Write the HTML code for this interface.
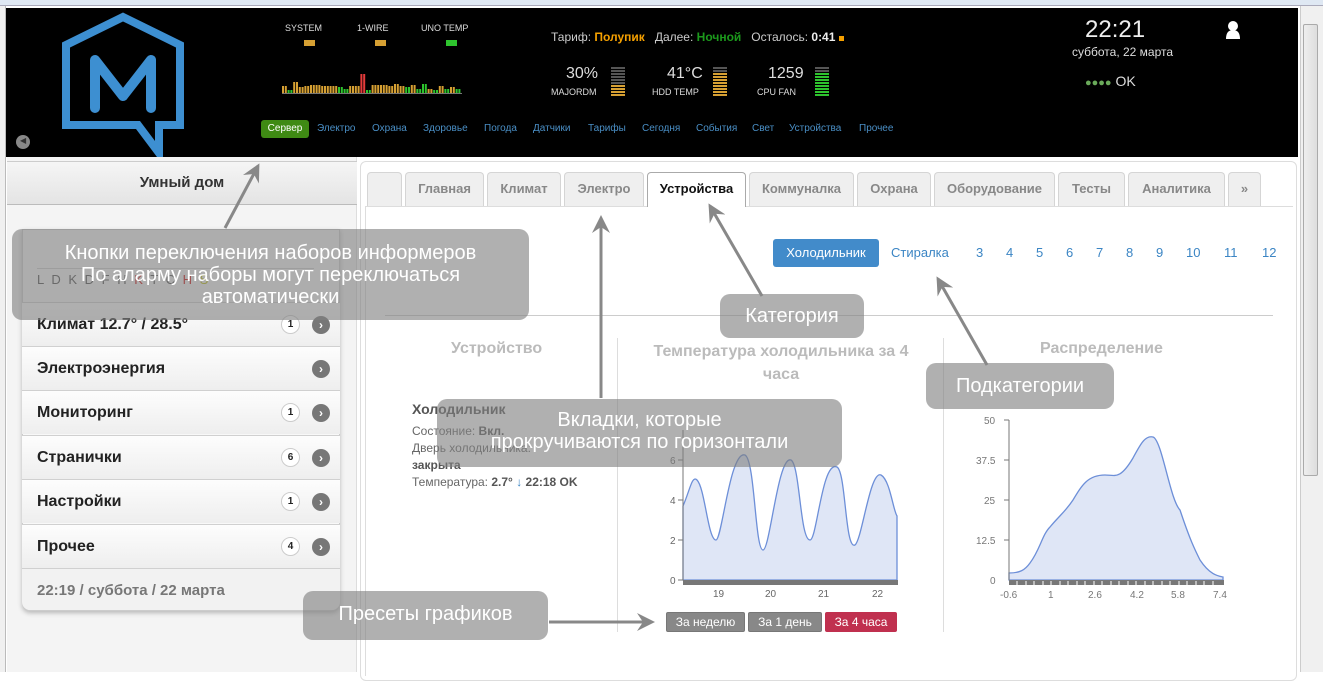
<!DOCTYPE html>
<html><head><meta charset="utf-8">
<style>
*{margin:0;padding:0;box-sizing:border-box}
body{width:1323px;height:672px;overflow:hidden;position:relative;background:#fff;font-family:"Liberation Sans","DejaVu Sans",sans-serif}
.a{position:absolute}
.hdr{left:6px;top:8px;width:1292px;height:149px;background:#000}
.t{position:absolute;white-space:nowrap}
.nav a{color:#4a8fc6;font-size:10px;text-decoration:none;position:absolute;top:123px}
.tab{position:absolute;top:172px;height:34px;background:#efefef;border:1px solid #d5d5d5;border-bottom:none;border-radius:4px 4px 0 0;font-size:13px;font-weight:bold;color:#888;text-align:center;line-height:32px}
.row{position:absolute;left:22px;width:318px;height:44px;border-top:1px solid #d0d0d0;background:linear-gradient(#fdfdfd,#eeeeee);font-size:16px;font-weight:bold;color:#222;line-height:44px;padding-left:15px}
.cnt{position:absolute;left:259px;top:12px;width:19px;height:19px;border-radius:50%;border:1px solid #ccc;background:#fff;font-size:10px;line-height:17px;text-align:center;color:#222}
.go{position:absolute;left:290px;top:13px;width:18px;height:18px;border-radius:50%;background:#777;color:#fff;font-size:12px;line-height:18px;text-align:center}
.ann{position:absolute;background:rgba(128,128,128,0.62);border-radius:10px;color:#fff;font-size:20px;text-align:center;line-height:22px}
.sub{position:absolute;top:245px;font-size:13px;color:#3b85c4}
</style></head><body>
<div class="a" style="left:0;top:0;width:1323px;height:6px;background:#dfe8f3;border-bottom:1px solid #aab"></div>
<div class="a" style="left:0;top:6px;width:6px;height:666px;background:#f0f0f0;border-right:1px solid #bbb"></div>
<div class="a" style="left:1300px;top:6px;width:23px;height:666px;background:#f0f0f0;border-left:1px solid #ccc"></div>
<div class="a" style="left:1303px;top:24px;width:15px;height:452px;background:linear-gradient(90deg,#eee,#ddd);border:1px solid #aaa;border-radius:2px"></div>
<div class="hdr a"></div>
<svg class="a" style="left:0;top:0" width="200" height="160">
<path d="M66 45 L123 17 L180 45 L180 125 L159 125 L159 153 L138 125 L66 125 Z" fill="none" stroke="#3d8fd1" stroke-width="8" stroke-linejoin="miter"/>
<path d="M95 108 L95 60 L123 96 L151 60 L151 108" fill="none" stroke="#3d8fd1" stroke-width="10" stroke-linejoin="round" stroke-linecap="round"/>
</svg>
<div class="a" style="left:16px;top:135px;width:14px;height:14px;border-radius:50%;background:#888"></div>
<div class="t" style="left:20px;top:136px;color:#333;font-size:8px">◀</div>
<div class="t" style="left:285px;top:23px;color:#ddd;font-size:9px">SYSTEM</div>
<div class="t" style="left:357px;top:23px;color:#ddd;font-size:9px">1-WIRE</div>
<div class="t" style="left:421px;top:23px;color:#ddd;font-size:9px">UNO TEMP</div>
<div class="a" style="left:304px;top:40px;width:11px;height:6px;background:#d6a033"></div>
<div class="a" style="left:375px;top:40px;width:11px;height:6px;background:#d6a033"></div>
<div class="a" style="left:446px;top:40px;width:11px;height:6px;background:#2ec42e"></div>
<svg class="a" style="left:280px;top:70px" width="186" height="26">
<g id="bg"></g>
<line x1="2" y1="23.5" x2="182" y2="23.5" stroke="#777"/>
</svg>
<script>
(function(){var h=[7,3,11,6,7,8,8,7,7,7,6,4,7,7,19,3,8,8,8,7,9,7,6,8,4,9,4,3,7,4,6,4];
var c="ogooooooooggoorgoooooogoggogogog";var s="";
for(var i=0;i<h.length;i++){var col=c[i]=="o"?"#d6a033":c[i]=="g"?"#2ec42e":"#e53b3b";
for(var j=0;j<2;j++){s+='<rect x="'+(2+i*5.6+j*2.8)+'" y="'+(23-h[i])+'" width="2" height="'+h[i]+'" fill="'+col+'"/>';}}
document.getElementById("bg").innerHTML=s;})();
</script>
<div class="nav">
<div class="a" style="left:261px;top:120px;width:48px;height:18px;background:#3f8a14;border-radius:3px;color:#fff;font-size:10px;text-align:center;line-height:18px">Сервер</div>
<a style="left:317px">Электро</a><a style="left:372px">Охрана</a><a style="left:423px">Здоровье</a><a style="left:484px">Погода</a><a style="left:533px">Датчики</a><a style="left:588px">Тарифы</a><a style="left:642px">Сегодня</a><a style="left:696px">События</a><a style="left:752px">Свет</a><a style="left:789px">Устройства</a><a style="left:859px">Прочее</a>
</div>
<div class="t" style="left:551px;top:30px;color:#ccc;font-size:12px">Тариф: <b style="color:#f5a000">Полупик</b> &nbsp; Далее: <b style="color:#1c9a1c">Ночной</b> &nbsp; Осталось: <b style="color:#eee">0:41</b> <span style="display:inline-block;width:5px;height:5px;background:#f5a000"></span></div>
<div class="t" style="left:566px;top:65px;color:#ddd;font-size:16px">30%</div>
<div class="t" style="left:551px;top:87px;color:#ddd;font-size:9px">MAJORDM</div>
<div class="t" style="left:667px;top:65px;color:#ddd;font-size:16px">41°C</div>
<div class="t" style="left:652px;top:87px;color:#ddd;font-size:9px">HDD TEMP</div>
<div class="t" style="left:768px;top:65px;color:#ddd;font-size:16px">1259</div>
<div class="t" style="left:757px;top:87px;color:#ddd;font-size:9px">CPU FAN</div>
<div class="a" style="left:611px;top:67px;width:14px;height:29px;background:repeating-linear-gradient(#555 0 2px,transparent 2px 3px)"></div>
<div class="a" style="left:611px;top:85px;width:14px;height:11px;background:repeating-linear-gradient(#d6a033 0 2px,#000 2px 3px)"></div>
<div class="a" style="left:713px;top:67px;width:14px;height:29px;background:repeating-linear-gradient(#555 0 2px,transparent 2px 3px)"></div>
<div class="a" style="left:713px;top:73px;width:14px;height:23px;background:repeating-linear-gradient(#d6a033 0 2px,#000 2px 3px)"></div>
<div class="a" style="left:815px;top:67px;width:14px;height:29px;background:repeating-linear-gradient(#555 0 2px,transparent 2px 3px)"></div>
<div class="a" style="left:815px;top:73px;width:14px;height:23px;background:repeating-linear-gradient(#2ec42e 0 2px,#000 2px 3px)"></div>
<div class="t" style="left:1085px;top:16px;color:#eee;font-size:24px">22:21</div>
<div class="t" style="left:1072px;top:45px;color:#ddd;font-size:12px">суббота, 22 марта</div>
<div class="t" style="left:1085px;top:73px;color:#ddd;font-size:14px"><span style="color:#6aaa5a;font-size:11px">●●●●</span> OK</div>
<svg class="a" style="left:1225px;top:20px" width="16" height="20"><circle cx="8" cy="6" r="5" fill="#fff"/><path d="M1 19 Q1 10 8 10 Q15 10 15 19 Z" fill="#fff"/></svg>
<div class="a" style="left:7px;top:157px;width:350px;height:515px;background:#f4f4f4;border-right:1px solid #ddd"></div>
<div class="a" style="left:7px;top:161px;width:350px;height:44px;background:linear-gradient(#f5f5f5,#e4e4e4);border-top:1px solid #ccc;border-bottom:1px solid #bbb;font-size:15px;font-weight:bold;color:#333;text-align:center;line-height:42px">Умный дом</div>
<div class="a" style="left:22px;top:229px;width:318px;height:382px;background:#f8f8f8;border:1px solid #ccc;border-radius:0 0 8px 8px;box-shadow:0 2px 5px rgba(0,0,0,.25)"></div>
<div class="a" style="left:37px;top:268px;width:277px;height:1px;background:#ccc"></div>
<div class="t" style="left:37px;top:272px;font-size:13px;color:#444;letter-spacing:2px">L D K D F H <span style="color:#c00">K</span> T C <span style="color:#c00">H</span> <span style="color:#bb0">S</span></div>
<div class="row" style="top:302px">Климат 12.7° / 28.5°<div class="cnt">1</div><div class="go">›</div></div>
<div class="row" style="top:346px">Электроэнергия<div class="go">›</div></div>
<div class="row" style="top:390px">Мониторинг<div class="cnt">1</div><div class="go">›</div></div>
<div class="row" style="top:435px">Странички<div class="cnt">6</div><div class="go">›</div></div>
<div class="row" style="top:479px">Настройки<div class="cnt">1</div><div class="go">›</div></div>
<div class="row" style="top:524px">Прочее<div class="cnt">4</div><div class="go">›</div></div>
<div class="row" style="top:568px;height:42px;background:#f2f2f2;color:#777;font-size:15px;border-radius:0 0 8px 8px">22:19 / суббота / 22 марта</div>
<div class="a" style="left:360px;top:161px;width:937px;height:520px;border:1px solid #ddd;border-radius:6px;background:#fff"></div>
<div class="a" style="left:365px;top:206px;width:928px;height:470px;border-top:1px solid #ddd;border-left:1px solid #ddd"></div>
<div class="tab" style="left:367px;width:35px"></div>
<div class="tab" style="left:405px;width:79px">Главная</div>
<div class="tab" style="left:487px;width:74px">Климат</div>
<div class="tab" style="left:564px;width:80px">Электро</div>
<div class="tab" style="left:647px;width:99px;background:#fff;color:#111;height:35px;border-color:#aaa">Устройства</div>
<div class="tab" style="left:749px;width:105px">Коммуналка</div>
<div class="tab" style="left:857px;width:74px">Охрана</div>
<div class="tab" style="left:934px;width:121px">Оборудование</div>
<div class="tab" style="left:1058px;width:67px">Тесты</div>
<div class="tab" style="left:1128px;width:97px">Аналитика</div>
<div class="tab" style="left:1228px;width:33px">»</div>
<div class="a" style="left:773px;top:239px;width:106px;height:28px;background:#428bca;border-radius:3px;color:#fff;font-size:13px;text-align:center;line-height:28px">Холодильник</div>
<div class="sub" style="left:891px">Стиралка</div>
<div class="sub" style="left:976px">3</div><div class="sub" style="left:1006px">4</div><div class="sub" style="left:1036px">5</div><div class="sub" style="left:1066px">6</div><div class="sub" style="left:1096px">7</div><div class="sub" style="left:1126px">8</div><div class="sub" style="left:1156px">9</div><div class="sub" style="left:1186px">10</div><div class="sub" style="left:1224px">11</div><div class="sub" style="left:1262px">12</div>
<div class="a" style="left:385px;top:315px;width:888px;height:1px;background:#ccc"></div>
<div class="a" style="left:617px;top:338px;width:1px;height:294px;background:#ddd"></div>
<div class="a" style="left:943px;top:338px;width:1px;height:294px;background:#ddd"></div>
<div class="t" style="left:451px;top:340px;font-size:16px;font-weight:bold;color:#bbb">Устройство</div>
<div class="t" style="left:620px;top:340px;width:322px;text-align:center;font-size:16px;font-weight:bold;color:#bbb;line-height:23px">Температура холодильника за 4<br>часа</div>
<div class="t" style="left:1040px;top:340px;font-size:16px;font-weight:bold;color:#bbb">Распределение</div>
<div class="t" style="left:412px;top:401px;font-size:14px;font-weight:bold;color:#555">Холодильник</div>
<div class="t" style="left:412px;top:423px;font-size:12px;color:#666;line-height:17px">Состояние: <b style="color:#555">Вкл.</b><br>Дверь холодильника:<br><b style="color:#555">закрыта</b><br>Температура: <b style="color:#555">2.7°</b> <span style="color:#3b85c4">↓</span> <b style="color:#555">22:18 OK</b></div>
<svg class="a" style="left:650px;top:410px" width="260" height="195" font-family="Liberation Sans" font-size="10" fill="#666">
<path d="M33 96 C40 80 42 65 47 70 C55 78 58 130 66 130 C72 130 80 40 95 45 C105 50 105 140 113 140 C120 140 128 45 141 50 C150 55 150 130 160 130 C167 130 172 50 187 57 C196 62 195 140 205 135 C212 130 220 60 231 65 C240 70 243 100 247 106 L247 170 L33 170 Z" fill="#dfe6f6" stroke="#6d8fd8" stroke-width="1.3"/>
<line x1="33" y1="20" x2="33" y2="170" stroke="#777"/>
<rect x="33" y="170" width="215" height="5" fill="#777"/>
<text x="20" y="54">6</text><text x="20" y="94">4</text><text x="20" y="134">2</text><text x="20" y="174">0</text>
<line x1="28" y1="50" x2="33" y2="50" stroke="#777"/><line x1="28" y1="90" x2="33" y2="90" stroke="#777"/><line x1="28" y1="130" x2="33" y2="130" stroke="#777"/><line x1="28" y1="170" x2="33" y2="170" stroke="#777"/>
<text x="63" y="187">19</text><text x="115" y="187">20</text><text x="168" y="187">21</text><text x="222" y="187">22</text>
</svg>
<div class="a" style="left:666px;top:612px;width:79px;height:20px;background:#888;border:1px solid #777;border-radius:2px;color:#fff;font-size:12px;text-align:center;line-height:18px">За неделю</div>
<div class="a" style="left:748px;top:612px;width:74px;height:20px;background:#888;border:1px solid #777;border-radius:2px;color:#fff;font-size:12px;text-align:center;line-height:18px">За 1 день</div>
<div class="a" style="left:825px;top:612px;width:72px;height:20px;background:#c0304f;border-radius:2px;color:#fff;font-size:12px;text-align:center;line-height:20px">За 4 часа</div>
<svg class="a" style="left:970px;top:410px" width="270" height="195" font-family="Liberation Sans" font-size="10" fill="#777">
<path d="M39 163 C50 163 55 160 60 153 C70 140 72 125 80 117 C90 105 95 102 103 90 C112 75 118 65 135 65 C145 65 150 70 163 48 C170 35 175 25 183 27 C192 30 200 90 210 100 C220 130 225 140 230 150 C240 165 248 166 253 167 L253 170 L39 170 Z" fill="#dfe6f6" stroke="#6d8fd8" stroke-width="1.3"/>
<line x1="39" y1="10" x2="39" y2="170" stroke="#777"/>
<rect x="39" y="170" width="215" height="5" fill="#777"/>
<g stroke="#fff"><path d="M47 171v4M56 171v4M64 171v4M73 171v4M81 171v4M90 171v4M98 171v4M107 171v4M115 171v4M124 171v4M132 171v4M141 171v4M149 171v4M158 171v4M166 171v4M175 171v4M183 171v4M192 171v4M200 171v4M209 171v4M217 171v4M226 171v4M234 171v4M243 171v4"/></g>
<text x="14" y="14">50</text><text x="6" y="54">37.5</text><text x="14" y="94">25</text><text x="6" y="134">12.5</text><text x="20" y="174">0</text>
<line x1="34" y1="10" x2="39" y2="10" stroke="#777"/><line x1="34" y1="50" x2="39" y2="50" stroke="#777"/><line x1="34" y1="90" x2="39" y2="90" stroke="#777"/><line x1="34" y1="130" x2="39" y2="130" stroke="#777"/>
<text x="30" y="188">-0.6</text><text x="78" y="188">1</text><text x="118" y="188">2.6</text><text x="160" y="188">4.2</text><text x="201" y="188">5.8</text><text x="243" y="188">7.4</text>
</svg>
<div class="ann" style="left:12px;top:229px;width:517px;height:91px;padding-top:13px">Кнопки переключения наборов информеров<br>По аларму наборы могут переключаться<br>автоматически</div>
<div class="ann" style="left:720px;top:294px;width:144px;height:44px;line-height:44px">Категория</div>
<div class="ann" style="left:926px;top:363px;width:188px;height:46px;line-height:46px">Подкатегории</div>
<div class="ann" style="left:437px;top:399px;width:405px;height:68px;padding-top:10px">Вкладки, которые<br>прокручиваются по горизонтали</div>
<div class="ann" style="left:303px;top:591px;width:245px;height:49px;line-height:47px">Пресеты графиков</div>
<svg class="a" style="left:0;top:0" width="1323" height="672">
<defs><marker id="m" markerWidth="6" markerHeight="6" refX="5" refY="3" orient="auto"><path d="M0 0 L6 3 L0 6 L2 3 Z" fill="#888"/></marker></defs>
<g stroke="#888" stroke-width="3" fill="none" marker-end="url(#m)">
<line x1="225" y1="228" x2="258" y2="166"/>
<line x1="601" y1="398" x2="601" y2="218"/>
<line x1="762" y1="296" x2="710" y2="206"/>
<line x1="987" y1="365" x2="938" y2="279"/>
<line x1="549" y1="622" x2="652" y2="622"/>
</g>
</svg>
</body></html>
